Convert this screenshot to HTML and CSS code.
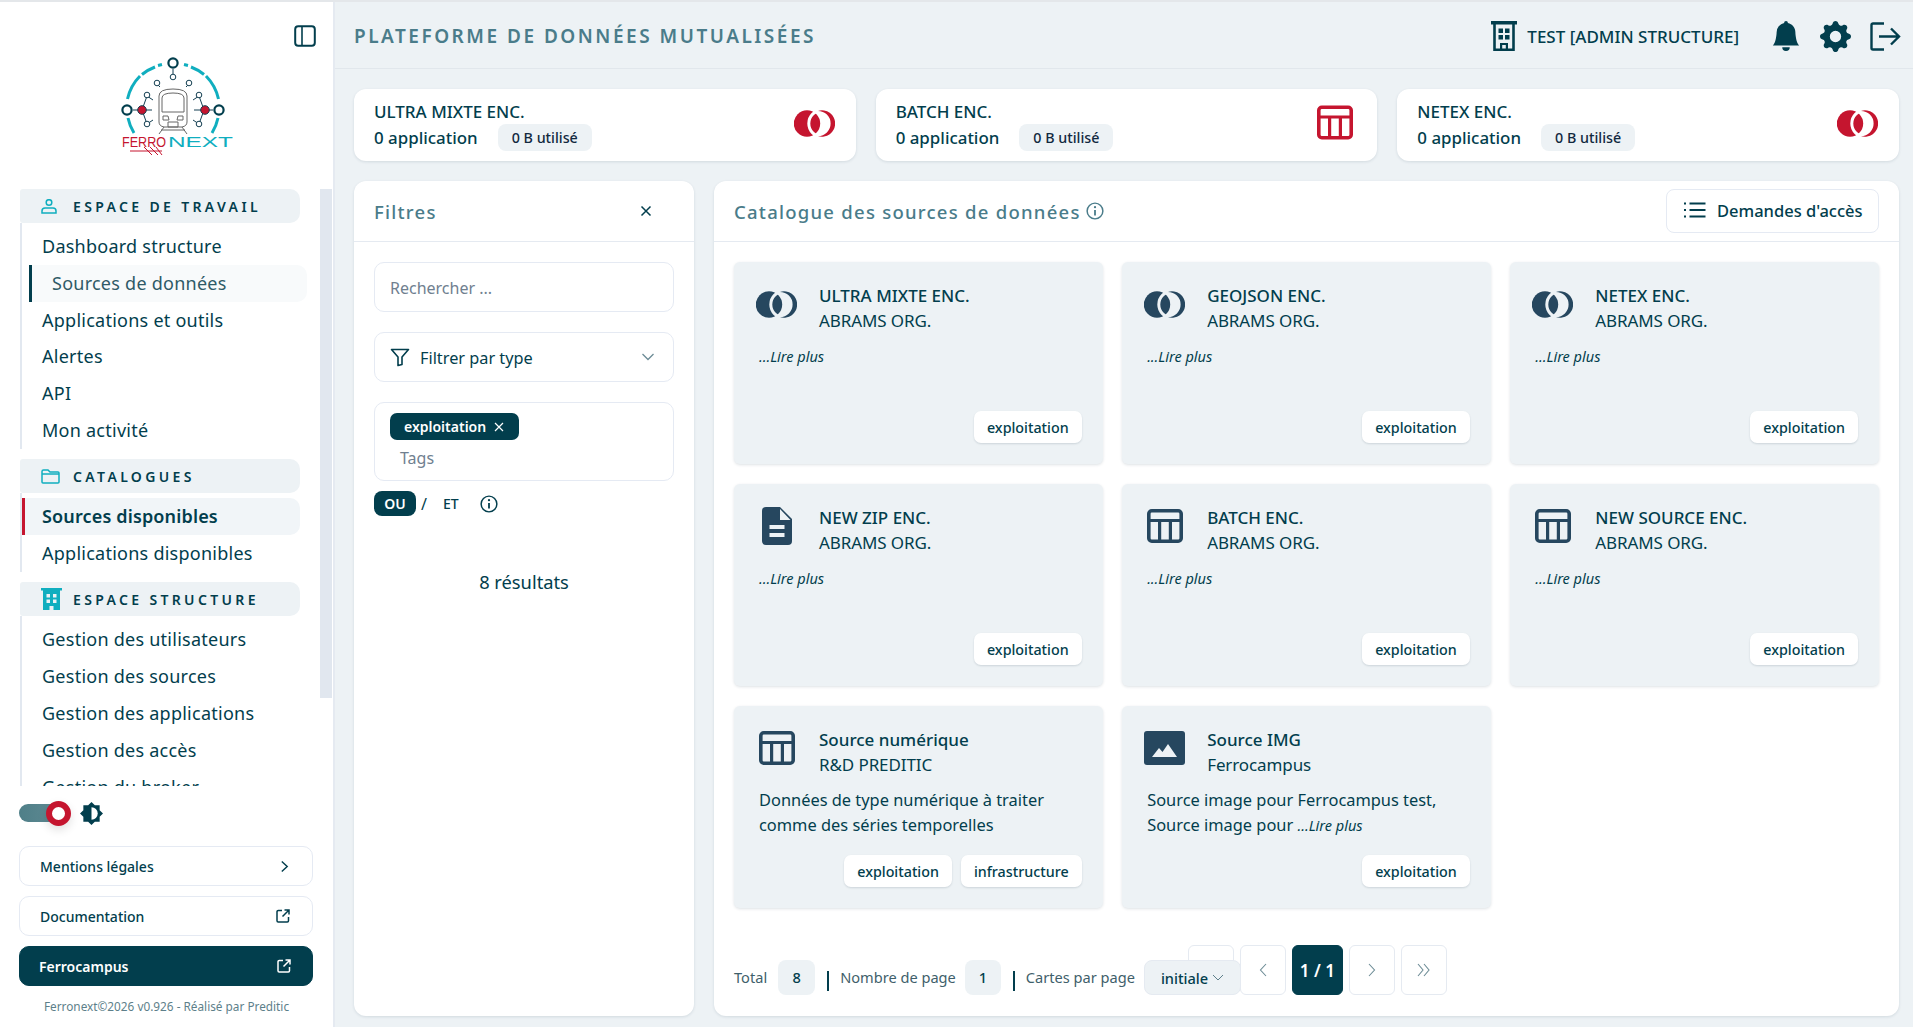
FILE: index.html
```html
<!DOCTYPE html>
<html lang="fr">
<head>
<meta charset="utf-8">
<title>Plateforme de données mutualisées</title>
<link rel="stylesheet" href="styles.css">
</head>
<body>
<svg class="defs" aria-hidden="true">
  <defs>
    <mask id="ring-cut" maskUnits="userSpaceOnUse" x="0" y="0" width="41" height="27">
      <rect width="41" height="27" fill="#fff"/>
      <circle cx="28" cy="13.5" r="13.2" fill="none" stroke="#000" stroke-width="3"/>
    </mask>
    <symbol id="i-rings" viewBox="0 0 41 27">
      <circle cx="13" cy="13.5" r="13.2" fill="currentColor" mask="url(#ring-cut)"/>
      <path fill="currentColor" d="M24 .9A13.2 13.2 0 1 1 24 26.1A12.6 12.6 0 0 0 24 .9Z"/>
    </symbol>
    <symbol id="i-table" viewBox="0 0 36 34">
      <rect x="1.8" y="1.8" width="32.4" height="30.4" rx="3" fill="none" stroke="currentColor" stroke-width="3.6"/>
      <path d="M1.6 11.5H34.4M12.6 11.5V32M23.4 11.5V32" fill="none" stroke="currentColor" stroke-width="3.2"/>
    </symbol>
    <symbol id="i-file" viewBox="0 0 30 38">
      <path fill="currentColor" d="M4 0H18L30 12V34a4 4 0 0 1-4 4H4a4 4 0 0 1-4-4V4a4 4 0 0 1 4-4Z"/>
      <path fill="#edf2f5" d="M18 2 28.5 13H18ZM7.500 18H22.500V22H7.500ZM7.500 26H22.500V30H7.500Z"/>
    </symbol>
    <symbol id="i-image" viewBox="0 0 41 34">
      <rect width="41" height="34" rx="3" fill="currentColor"/>
      <path fill="#edf2f5" d="M8 26 15 17 18.500 21 24 13 33 26Z"/>
    </symbol>
    <symbol id="i-ext" viewBox="0 0 14 14">
      <path d="M6 1.500H2.200A1.200 1.200 0 0 0 1 2.700V11.800A1.200 1.200 0 0 0 2.200 13H11.300A1.200 1.200 0 0 0 12.500 11.800V8M8.500 1H13V5.500M13 1 6.500 7.500" fill="none" stroke="currentColor" stroke-width="1.500"/>
    </symbol>
    <symbol id="i-info" viewBox="0 0 16 16">
      <circle cx="8" cy="8" r="7" fill="none" stroke="currentColor" stroke-width="1.300"/>
      <path d="M8 7V12" stroke="currentColor" stroke-width="1.600"/>
      <circle cx="8" cy="4.600" r="1" fill="currentColor"/>
    </symbol>
    <symbol id="i-building" viewBox="0 0 26 30">
      <path fill="none" stroke="currentColor" stroke-width="2.600" d="M3.500 3V28.700H22.500V3"/>
      <path fill="currentColor" d="M0 0H26V3.500H0ZM7.500 7.500H12V12H7.500ZM14 7.500H18.500V12H14ZM7.500 14H12V18.500H7.500ZM14 14H18.500V18.500H14ZM9 22H17V29H14.800V24H11.200V29H9Z"/>
    </symbol>
  </defs>
</svg>

<div class="app">
  <aside class="sidebar">
    <div class="side-top">
      <svg class="icon-panel" viewBox="0 0 22 22"><rect x="1.200" y="1.200" width="19.600" height="19.600" rx="3" fill="none" stroke="currentColor" stroke-width="2"/><path d="M8 1.500V20.500" stroke="currentColor" stroke-width="1.600"/></svg>
    </div>
    <svg class="logo" viewBox="120 57 114 98" role="img" aria-label="Ferronext">
      <g fill="none" stroke="#10aebf" stroke-width="3">
        <path d="M127.500 99A47 47 0 0 1 140 76M142 74.500A47 47 0 0 1 155 67M158 65.500 162 64.500M218.500 99A47 47 0 0 0 206 76M204 74.500A47 47 0 0 0 191 67M188 65.500 184 64.500M128 118A47 47 0 0 0 134 133M218 118A47 47 0 0 1 212 133"/>
      </g>
      <g fill="none" stroke="#143f52" stroke-width="1">
        <path d="M173 69V74M133 110H152M194 110H213M160 87 156 83M186 87 190 83M142 110 147 96 153 100M147 96M204 110 199 96 193 100M142 110 147 124 153 120M204 110 199 124 193 120"/>
        <g fill="#fff"><circle cx="173" cy="77" r="2.800"/><circle cx="157" cy="83" r="2.800"/><circle cx="189" cy="83" r="2.800"/><circle cx="147" cy="95" r="2.800"/><circle cx="199" cy="95" r="2.800"/><circle cx="147" cy="124" r="2.800"/><circle cx="199" cy="124" r="2.800"/></g>
      </g>
      <g fill="#fff" stroke="#023e4d" stroke-width="2.200"><circle cx="173" cy="63" r="4.600"/><circle cx="127" cy="110" r="4.600"/><circle cx="219" cy="110" r="4.600"/></g>
      <g fill="#c5152f" stroke="#143f52" stroke-width="1"><circle cx="142" cy="110" r="4.300"/><circle cx="205" cy="110" r="4.300"/></g>
      <g fill="none" stroke="#666" stroke-width="1">
        <path d="M159 122V96Q159 89 173 89T187 96V122Q187 126 182 127H164Q159 126 159 122Z"/>
        <path d="M162 112V98Q162 93 173 93T184 98V112Z"/>
        <path d="M163 116H168L169 120H163ZM183 116H178L177 120H183ZM168 122H178V127H168ZM164 127 159 134M182 127 187 134M161 130H185"/>
      </g>
      <text class="logo-ferro" x="122" y="147" textLength="44" lengthAdjust="spacingAndGlyphs">FERRO</text>
      <text class="logo-next" x="168" y="147" textLength="65" lengthAdjust="spacingAndGlyphs">NEXT</text>
      <path d="M130 151H162M144 147 152 155M150 147 158 155M156 147 162 155" fill="none" stroke="#c5152f" stroke-width="1"/>
    </svg>

    <div class="nav">
      <nav class="nav-list">
        <h3 class="nav-head">
          <span class="nav-ico"><svg viewBox="0 0 16 15" width="16" height="15"><circle cx="8" cy="3.500" r="2.800" fill="none" stroke="currentColor" stroke-width="1.500"/><path d="M1 14V12Q1 9 4 9H12Q15 9 15 12V14Z" fill="none" stroke="currentColor" stroke-width="1.500"/></svg></span>ESPACE DE TRAVAIL
        </h3>
        <ul class="nav-group">
          <li class="nav-item">Dashboard structure</li>
          <li class="nav-item nav-sub">Sources de données</li>
          <li class="nav-item">Applications et outils</li>
          <li class="nav-item">Alertes</li>
          <li class="nav-item">API</li>
          <li class="nav-item">Mon activité</li>
        </ul>
        <h3 class="nav-head">
          <span class="nav-ico"><svg viewBox="0 0 19 15" width="19" height="15"><path d="M1 13V2.500Q1 1 2.500 1H7L9 3H17Q18 3 18 4V13Q18 14 17 14H2Q1 14 1 13ZM1 5H18" fill="none" stroke="currentColor" stroke-width="1.500"/></svg></span>CATALOGUES
        </h3>
        <ul class="nav-group">
          <li class="nav-item nav-active">Sources disponibles</li>
          <li class="nav-item">Applications disponibles</li>
        </ul>
        <h3 class="nav-head">
          <span class="nav-ico"><svg viewBox="0 0 21 22" width="21" height="22"><path fill="currentColor" d="M0 0H21V2.500H0ZM2 2.500H19V22H12.500V18H8.500V22H2ZM5.500 6V9.500H9V6ZM12 6V9.500H15.500V6ZM5.500 11.500V15H9V11.500ZM12 11.500V15H15.500V11.500Z" fill-rule="evenodd"/></svg></span>ESPACE STRUCTURE
        </h3>
        <ul class="nav-group">
          <li class="nav-item">Gestion des utilisateurs</li>
          <li class="nav-item">Gestion des sources</li>
          <li class="nav-item">Gestion des applications</li>
          <li class="nav-item">Gestion des accès</li>
          <li class="nav-item">Gestion du broker</li>
        </ul>
      </nav>
      <div class="nav-thumb"></div>
    </div>

    <div class="theme-row">
      <div class="switch"><span class="switch-knob"></span></div>
      <svg class="icon-theme" viewBox="0 0 24 24"><path fill="currentColor" d="M12 0 15.500 3.500H20.500V8.500L24 12 20.500 15.500V20.500H15.500L12 24 8.500 20.500H3.500V15.500L0 12 3.500 8.500V3.500H8.500Z"/><path fill="#fff" d="M12 5.500A6.500 6.500 0 0 1 12 18.500Z"/></svg>
    </div>
    <div class="side-links">
      <a class="side-link">Mentions légales<svg class="ico-chev" viewBox="0 0 10 14"><path d="M2 1.500 8 7 2 12.500" fill="none" stroke="currentColor" stroke-width="1.600"/></svg></a>
      <a class="side-link">Documentation<svg class="ico-ext"><use href="#i-ext"/></svg></a>
      <a class="side-link side-link-dark">Ferrocampus<svg class="ico-ext"><use href="#i-ext"/></svg></a>
    </div>
    <p class="side-foot">Ferronext©2026 v0.926 - Réalisé par Preditic</p>
  </aside>

  <div class="main">
    <header class="topbar">
      <h1 class="top-title">PLATEFORME DE DONNÉES MUTUALISÉES</h1>
      <div class="top-user"><svg class="ico-build"><use href="#i-building"/></svg>TEST [ADMIN STRUCTURE]</div>
      <svg class="ico-bell" viewBox="0 0 16 16"><path fill="currentColor" d="M8 16a2 2 0 0 0 2-2H6a2 2 0 0 0 2 2zm.995-14.901a1 1 0 1 0-1.990 0A5.002 5.002 0 0 0 3 6c0 1.098-.5 6-2 7h14c-1.500-1-2-5.902-2-7 0-2.420-1.720-4.440-4.005-4.901z"/></svg>
      <svg class="ico-gear" viewBox="0 0 16 16"><path fill="currentColor" d="M9.405 1.050c-.413-1.400-2.397-1.400-2.810 0l-.1.340a1.464 1.464 0 0 1-2.105.872l-.31-.170c-1.283-.698-2.686.705-1.987 1.987l.169.311c.446.820.023 1.841-.872 2.105l-.34.1c-1.400.413-1.400 2.397 0 2.810l.34.1a1.464 1.464 0 0 1 .872 2.105l-.170.31c-.698 1.283.705 2.686 1.987 1.987l.311-.169a1.464 1.464 0 0 1 2.105.872l.1.340c.413 1.400 2.397 1.400 2.810 0l.1-.340a1.464 1.464 0 0 1 2.105-.872l.31.170c1.283.698 2.686-.705 1.987-1.987l-.169-.311a1.464 1.464 0 0 1 .872-2.105l.340-.1c1.400-.413 1.400-2.397 0-2.810l-.340-.1a1.464 1.464 0 0 1-.872-2.105l.170-.31c.698-1.283-.705-2.686-1.987-1.987l-.311.169a1.464 1.464 0 0 1-2.105-.872l-.1-.340zM8 10.930a2.929 2.929 0 1 1 0-5.860 2.929 2.929 0 0 1 0 5.858z"/></svg>
      <svg class="ico-out" viewBox="0 0 31 29"><path d="M14 1.500H3A1.500 1.500 0 0 0 1.500 3V26A1.500 1.500 0 0 0 3 27.500H14M9 14.500H29M21 6.500 29 14.500 21 22.500" fill="none" stroke="currentColor" stroke-width="2.400"/></svg>
    </header>

    <div class="content">
      <section class="stats">
        <article class="stat">
          <div><div class="stat-title">ULTRA MIXTE ENC.</div><div class="stat-sub">0 application<span class="stat-pill">0 B utilisé</span></div></div>
          <svg class="stat-rings"><use href="#i-rings"/></svg>
        </article>
        <article class="stat">
          <div><div class="stat-title">BATCH ENC.</div><div class="stat-sub">0 application<span class="stat-pill">0 B utilisé</span></div></div>
          <svg class="stat-table"><use href="#i-table"/></svg>
        </article>
        <article class="stat">
          <div><div class="stat-title">NETEX ENC.</div><div class="stat-sub">0 application<span class="stat-pill">0 B utilisé</span></div></div>
          <svg class="stat-rings"><use href="#i-rings"/></svg>
        </article>
      </section>

      <section class="panels">
        <aside class="panel panel-filter">
          <div class="panel-head">
            <h2 class="panel-title">Filtres</h2>
            <svg class="ico-close" viewBox="0 0 12 12"><path d="M1.500 1.500 10.500 10.500M10.500 1.500 1.500 10.500" stroke="currentColor" stroke-width="1.500"/></svg>
          </div>
          <div class="filter-body">
            <div class="field field-muted">Rechercher ...</div>
            <div class="field field-select">
              <svg class="ico-funnel" viewBox="0 0 19 19"><path d="M1 1.500H18L11.500 9V16.500L7.500 17.500V9Z" fill="none" stroke="currentColor" stroke-width="1.600" stroke-linejoin="round"/></svg>
              <span class="field-grow">Filtrer par type</span>
              <svg class="ico-down" viewBox="0 0 14 8"><path d="M1.500 1 7 6.500 12.500 1" fill="none" stroke="currentColor" stroke-width="1.300"/></svg>
            </div>
            <div class="field-tags">
              <span class="chip">exploitation<svg class="chip-x" viewBox="0 0 10 10"><path d="M1 1 9 9M9 1 1 9" stroke="currentColor" stroke-width="1.200"/></svg></span>
              <div class="tags-ph">Tags</div>
            </div>
            <div class="logic">
              <span class="logic-on">OU</span><span class="logic-sep">/</span><span class="logic-off">ET</span>
              <svg class="ico-info-lg"><use href="#i-info"/></svg>
            </div>
            <p class="results">8 résultats</p>
          </div>
        </aside>

        <main class="panel panel-cat">
          <div class="panel-head">
            <h2 class="panel-title">Catalogue des sources de données</h2>
            <svg class="ico-info"><use href="#i-info"/></svg>
            <button class="btn-access" type="button">
              <svg class="ico-list" viewBox="0 0 22 16"><path d="M5.500 1.500H21.500M5.500 8H21.500M5.500 14.500H21.500" stroke="currentColor" stroke-width="1.800"/><path d="M0 .5H2V2.500H0ZM0 7H2V9H0ZM0 13.500H2V15.500H0Z" fill="currentColor"/></svg>
              Demandes d'accès
            </button>
          </div>
          <div class="cat-body">
            <div class="grid">
              <article class="card">
                <div class="card-head"><div class="card-ico"><svg class="c-rings"><use href="#i-rings"/></svg></div><div><div class="card-title">ULTRA MIXTE ENC.</div><div class="card-org">ABRAMS ORG.</div></div></div>
                <p class="card-desc"><em class="more">...Lire plus</em></p>
                <div class="card-tags"><span class="tag">exploitation</span></div>
              </article>
              <article class="card">
                <div class="card-head"><div class="card-ico"><svg class="c-rings"><use href="#i-rings"/></svg></div><div><div class="card-title">GEOJSON ENC.</div><div class="card-org">ABRAMS ORG.</div></div></div>
                <p class="card-desc"><em class="more">...Lire plus</em></p>
                <div class="card-tags"><span class="tag">exploitation</span></div>
              </article>
              <article class="card">
                <div class="card-head"><div class="card-ico"><svg class="c-rings"><use href="#i-rings"/></svg></div><div><div class="card-title">NETEX ENC.</div><div class="card-org">ABRAMS ORG.</div></div></div>
                <p class="card-desc"><em class="more">...Lire plus</em></p>
                <div class="card-tags"><span class="tag">exploitation</span></div>
              </article>
              <article class="card">
                <div class="card-head"><div class="card-ico"><svg class="c-file"><use href="#i-file"/></svg></div><div><div class="card-title">NEW ZIP ENC.</div><div class="card-org">ABRAMS ORG.</div></div></div>
                <p class="card-desc"><em class="more">...Lire plus</em></p>
                <div class="card-tags"><span class="tag">exploitation</span></div>
              </article>
              <article class="card">
                <div class="card-head"><div class="card-ico"><svg class="c-table"><use href="#i-table"/></svg></div><div><div class="card-title">BATCH ENC.</div><div class="card-org">ABRAMS ORG.</div></div></div>
                <p class="card-desc"><em class="more">...Lire plus</em></p>
                <div class="card-tags"><span class="tag">exploitation</span></div>
              </article>
              <article class="card">
                <div class="card-head"><div class="card-ico"><svg class="c-table"><use href="#i-table"/></svg></div><div><div class="card-title">NEW SOURCE ENC.</div><div class="card-org">ABRAMS ORG.</div></div></div>
                <p class="card-desc"><em class="more">...Lire plus</em></p>
                <div class="card-tags"><span class="tag">exploitation</span></div>
              </article>
              <article class="card">
                <div class="card-head"><div class="card-ico"><svg class="c-table"><use href="#i-table"/></svg></div><div><div class="card-title">Source numérique</div><div class="card-org">R&amp;D PREDITIC</div></div></div>
                <p class="card-desc">Données de type numérique à traiter comme des séries temporelles</p>
                <div class="card-tags"><span class="tag">exploitation</span><span class="tag">infrastructure</span></div>
              </article>
              <article class="card">
                <div class="card-head"><div class="card-ico"><svg class="c-image"><use href="#i-image"/></svg></div><div><div class="card-title">Source IMG</div><div class="card-org">Ferrocampus</div></div></div>
                <p class="card-desc">Source image pour Ferrocampus test, Source image pour <em class="more">...Lire plus</em></p>
                <div class="card-tags"><span class="tag">exploitation</span></div>
              </article>
            </div>
            <div class="pager">
              <span class="pg-label">Total</span><span class="pg-pill pg-pill-8">8</span><span class="pg-div"></span>
              <span class="pg-label">Nombre de page</span><span class="pg-pill pg-pill-1">1</span><span class="pg-div"></span>
              <span class="pg-label">Cartes par page</span>
              <span class="pg-select">initiale<svg class="pg-chev" viewBox="0 0 12 7"><path d="M1 1 6 6 11 1" fill="none" stroke="currentColor" stroke-width="1"/></svg></span>
              <div class="pg-btns">
                <span class="pg-btn pg-first"></span>
                <span class="pg-btn"><svg class="pg-arrow" viewBox="0 0 8 14"><path d="M7 1 1.500 7 7 13" fill="none" stroke="currentColor" stroke-width="1.100"/></svg></span>
                <span class="pg-btn pg-current">1 / 1</span>
                <span class="pg-btn"><svg class="pg-arrow" viewBox="0 0 8 14"><path d="M1 1 6.500 7 1 13" fill="none" stroke="currentColor" stroke-width="1.100"/></svg></span>
                <span class="pg-btn"><svg class="pg-arrow-d" viewBox="0 0 13 14"><path d="M1 1 6 7 1 13M7 1 12 7 7 13" fill="none" stroke="currentColor" stroke-width="1.100"/></svg></span>
              </div>
            </div>
          </div>
        </main>
      </section>
    </div>
  </div>
</div>
</body>
</html>
```
FILE: styles.css
```css
* { box-sizing: border-box; }
html, body { margin: 0; padding: 0; height: 100%; }
body {
  font-family: "Noto Sans", "Open Sans", sans-serif;
  color: #023e4d;
  background: #edf2f5;
  overflow: hidden;
}
h1, h2, h3, p, ul { margin: 0; padding: 0; }
ul { list-style: none; }
svg { display: block; flex: none; }
.defs { width: 0; height: 0; position: absolute; }

.app {
  display: flex;
  width: 1913px;
  height: 1027px;
  border-top: 2px solid #e4e7ea;
}

/* Sidebar */
.sidebar {
  width: 335px;
  flex: none;
  background: #fff;
  border-right: 2px solid #e5eaf1;
  display: flex;
  flex-direction: column;
}
.side-top {
  display: flex;
  justify-content: flex-end;
  padding: 23px 17px 0 0;
}
.icon-panel { width: 22px; height: 22px; color: #023e4d; }
.logo { width: 114px; height: 98px; margin: 10px 0 34px 120px; }
.logo-ferro { font: 400 14px "Liberation Sans", sans-serif; fill: #c5152f; }
.logo-next { font: 400 14px "Liberation Sans", sans-serif; fill: #10aebf; }

.nav { display: flex; height: 597px; overflow: hidden; flex: none; }
.nav-list { width: 280px; margin-left: 20px; flex: none; }
.nav-thumb { width: 12px; height: 509px; margin-left: 20px; background: #e1e7ef; }
.nav-head {
  height: 34px;
  display: flex;
  align-items: center;
  background: #edf2f5;
  border-radius: 3px 10px 10px 3px;
  font-size: 14px;
  font-weight: 600;
  letter-spacing: 3.350px;
  line-height: 1;
  padding-top: 2px;
}
.nav-ico {
  width: 53px;
  height: 24px;
  margin-top: -2px;
  padding-left: 21px;
  display: flex;
  align-items: center;
  color: #10aebf;
  flex: none;
}
.nav-group {
  border-left: 2px solid #e2e8f0;
  padding-top: 5px;
  margin-bottom: 10.500px;
}
.nav-item {
  height: 36.8px;
  line-height: 36px;
  font-size: 18px;
  letter-spacing: .25px;
  padding-left: 20px;
}
.nav-sub {
  margin-left: 7px;
  width: 278px;
  padding-left: 20px;
  border-left: 3px solid #023e4d;
  background: #f8fafb;
  border-radius: 0 10px 10px 0;
  color: #2f5a67;
}
.nav-active {
  border-left: 3px solid #c5152f;
  padding-left: 17px;
  background: #f1f5f8;
  border-radius: 0 10px 10px 0;
  font-weight: 600;
  letter-spacing: .15px;
}

.theme-row {
  display: flex;
  align-items: center;
  height: 26px;
  margin: 14px 0 0 19px;
}
.switch {
  width: 40px;
  height: 18px;
  border-radius: 9px;
  background: linear-gradient(90deg, #4f7f88, #5f8a93);
  position: relative;
}
.switch-knob {
  position: absolute;
  left: 27px;
  top: -3.500px;
  width: 25px;
  height: 25px;
  border-radius: 50%;
  background: #fff;
  border: 6px solid #c5152f;
  box-shadow: 0 4px 10px rgba(0, 0, 0, .12);
}
.icon-theme { width: 23px; height: 23px; margin-left: 21px; color: #023e4d; }

.side-links { display: flex; flex-direction: column; gap: 10px; margin: 20px 20px 0 19px; }
.side-link {
  height: 40px;
  display: flex;
  align-items: center;
  justify-content: space-between;
  padding: 0 22px 0 20px;
  border: 1.500px solid #e5eaf3;
  border-radius: 10px;
  font-size: 14px;
  font-weight: 500;
}
.side-link-dark {
  background: #023e4d;
  border-color: #023e4d;
  color: #fff;
  padding-left: 19px;
  font-weight: 600;
  padding-right: 21px;
}
.ico-chev { width: 9px; height: 13px; margin-right: 1px; }
.ico-ext { width: 14px; height: 14px; }
.side-foot {
  text-align: center;
  font-size: 11.800px;
  color: #5d7f8a;
  margin-top: 12px;
}

/* Main */
.main { flex: 1; min-width: 0; display: flex; flex-direction: column; }
.topbar {
  height: 67px;
  flex: none;
  display: flex;
  align-items: center;
  padding: 2px 12px 0 19px;
  border-bottom: 1px solid #e1e7ec;
}
.top-title {
  flex: 1;
  font-size: 19px;
  font-weight: 600;
  letter-spacing: 2.500px;
  color: #4a7c8a;
}
.top-user { display: flex; align-items: center; font-size: 17px; font-weight: 500; }
.ico-build { width: 26px; height: 30px; margin-right: 10px; }
.ico-bell { width: 30px; height: 32px; margin-left: 32px; }
.ico-gear { width: 31px; height: 31px; margin-left: 19px; }
.ico-out { width: 31px; height: 29px; margin-left: 19px; }

.content {
  flex: 1;
  min-height: 0;
  display: flex;
  flex-direction: column;
  padding: 20px 14px 11px 19px;
  gap: 20px;
}
.stats { display: grid; grid-template-columns: repeat(3, 1fr); gap: 20px; flex: none; }
.stat {
  height: 72px;
  background: #fff;
  border-radius: 12px;
  box-shadow: 0 1px 3px rgba(20, 50, 70, .12);
  display: flex;
  align-items: center;
  justify-content: space-between;
  padding: 0 21px 0 20px;
}
.stat-title { font-size: 17px; line-height: 24px; font-weight: 500; margin-top: 1px; }
.stat-sub { display: flex; align-items: center; font-size: 16.900px; font-weight: 500; line-height: 27px; }
.stat-pill {
  margin-left: 20px;
  height: 27px;
  padding: 0 14px;
  border-radius: 8px;
  background: #edf2f5;
  font-size: 14.300px;
  font-weight: 500;
  color: #12293f;
}
.stat-rings { width: 41px; height: 27px; color: #c5152f; margin-top: -4px; }
.stat-table { width: 36px; height: 35px; color: #c5152f; margin: -6px 3px 0 0; }

.panels { flex: 1; min-height: 0; display: flex; gap: 20px; }
.panel {
  background: #fff;
  border-radius: 12px;
  box-shadow: 0 1px 3px rgba(20, 50, 70, .12);
  display: flex;
  flex-direction: column;
  min-width: 0;
}
.panel-filter { width: 340px; flex: none; }
.panel-cat { flex: 1; }
.panel-head {
  height: 61px;
  flex: none;
  display: flex;
  align-items: center;
  padding: 0 20px;
  border-bottom: 1.500px solid #e5eaf1;
}
.panel-title {
  font-size: 18.500px;
  font-weight: 500;
  letter-spacing: 1.250px;
  color: #4a7c8a;
  flex: none;
  padding-top: 1px;
}
.ico-close { width: 12px; height: 12px; margin-left: auto; margin-right: 22px; }

.filter-body { padding: 20px 20px; display: flex; flex-direction: column; }
.field {
  height: 50px;
  display: flex;
  align-items: center;
  padding: 0 15px;
  border: 1.500px solid #e5eaf3;
  border-radius: 10px;
  font-size: 16px;
  margin-bottom: 20px;
}
.field-muted { color: #70808f; padding-top: 1px; }
.field-grow { flex: 1; font-size: 16.300px; padding-top: 2px; margin-left: -1px; }
.ico-funnel { width: 20px; height: 19px; margin-right: 11px; }
.ico-down { width: 14px; height: 8px; color: #6d8c96; margin-right: 3px; }
.field-tags {
  height: 79px;
  padding: 10px 15px;
  border: 1.500px solid #e5eaf3;
  border-radius: 10px;
}
.chip {
  display: inline-flex;
  align-items: center;
  height: 27px;
  padding: 0 15px 0 14px;
  border-radius: 7px;
  background: #023e4d;
  color: #fff;
  font-size: 14px;
  font-weight: 600;
}
.chip-x { width: 10px; height: 10px; margin-left: 8px; }
.tags-ph { color: #70808f; font-size: 16px; padding-left: 10px; line-height: 24px; margin-top: 6px; }
.logic { display: flex; align-items: center; height: 25px; margin-top: 10px; }
.logic-on {
  width: 42px;
  height: 25px;
  border-radius: 8px;
  background: #023e4d;
  color: #fff;
  text-align: center;
  font-size: 14px;
  line-height: 25px;
  font-weight: 600;
}
.logic-sep { margin-left: 5px; font-size: 16px; }
.logic-off { margin-left: 16px; font-size: 14px; font-weight: 500; }
.ico-info-lg { width: 18px; height: 18px; margin-left: 21px; }
.results { text-align: center; font-size: 18.300px; margin-top: 53px; }

.ico-info { width: 18px; height: 18px; margin-left: 5px; color: #4a7c8a; }
.btn-access {
  margin-left: auto;
  height: 44px;
  width: 213px;
  display: flex;
  align-items: center;
  padding: 0 0 2px 17px;
  background: #fff;
  border: 1.500px solid #e5eaf3;
  border-radius: 8px;
  font: 500 16.500px "Noto Sans", sans-serif;
  color: #023e4d;
  white-space: nowrap;
}
.ico-list { width: 22px; height: 16px; margin-right: 11px; }

.cat-body { flex: 1; min-height: 0; display: flex; flex-direction: column; padding: 20px 20px 21px 20px; }
.grid { display: grid; grid-template-columns: repeat(3, 1fr); gap: 20px 19.500px; }
.card {
  height: 202px;
  background: #edf2f5;
  border-radius: 6px;
  box-shadow: 0 1px 3px rgba(20, 50, 70, .14);
  display: flex;
  flex-direction: column;
  padding: 21px 21px 21px 22px;
}
.card-head { display: flex; gap: 22px; align-items: flex-start; }
.card-ico { width: 41px; height: 42px; display: flex; align-items: center; justify-content: center; color: #26475f; flex: none; }
.c-rings { width: 41px; height: 27px; }
.c-file { width: 30px; height: 38px; }
.c-table { width: 36px; height: 34px; }
.c-image { width: 41px; height: 34px; }
.card-title { font-size: 17px; font-weight: 500; line-height: 25px; }
.card-org { font-size: 17px; line-height: 25px; font-weight: 400; letter-spacing: -.1px; }
.card-desc { margin-top: 10px; padding: 0 30px 0 3px; font-size: 16.400px; line-height: 25px; }
.more { font-size: 14.500px; }
.card-tags { margin-top: auto; display: flex; justify-content: flex-end; gap: 9px; }
.tag {
  height: 32px;
  padding: 0 13px;
  display: flex;
  align-items: center;
  background: #fff;
  border-radius: 7px;
  box-shadow: 0 1px 2px rgba(20, 50, 70, .15);
  font-size: 14.300px;
  font-weight: 500;
}

.pager { margin-top: auto; display: flex; align-items: flex-end; font-size: 14.600px; }
.pg-label { height: 35px; line-height: 35px; color: #3f5f6b; white-space: nowrap; }
.pg-pill {
  height: 35px;
  line-height: 35px;
  border-radius: 8px;
  background: #edf2f5;
  text-align: center;
  font-weight: 500;
}
.pg-pill-8 { width: 37px; margin-left: 11px; }
.pg-pill-1 { width: 36px; margin-left: 9px; }
.pg-div { width: 2px; height: 20px; margin: 0 11px 4px 12px; background: #023e4d; }
.pg-select {
  position: relative;
  z-index: 1;
  width: 97px;
  height: 35px;
  margin-left: 9px;
  display: flex;
  align-items: center;
  padding-left: 16px;
  background: #edf2f5;
  border: 1px solid #e5eaf1;
  border-radius: 8px;
  font-weight: 500;
}
.pg-chev { width: 12px; height: 7px; margin-left: 4px; color: #5d7f8a; }
.pg-btns { display: flex; gap: 6px; margin-left: -53px; }
.pg-btn {
  width: 46px;
  height: 50px;
  display: flex;
  align-items: center;
  justify-content: center;
  background: #fff;
  border: 1.500px solid #e5eaf1;
  border-radius: 6px;
  color: #6d8c96;
}
.pg-current {
  width: 51px;
  background: #023e4d;
  border-color: #023e4d;
  color: #fff;
  font-size: 17px;
  font-weight: 600;
}
.pg-arrow { width: 8px; height: 14px; }
.pg-arrow-d { width: 13px; height: 14px; }
```
